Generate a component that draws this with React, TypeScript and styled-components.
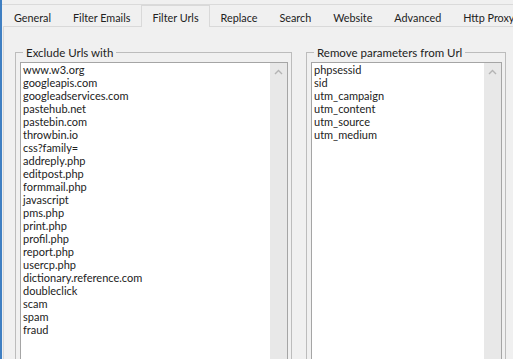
import styled, { createGlobalStyle } from "styled-components";

const GlobalStyle = createGlobalStyle`
  html, body {
    margin: 0;
    padding: 0;
    background: #f0f0f0;
  }
  body {
    font-family: Lato, "Open Sans", sans-serif;
    font-size: 11px;
    color: #222;
  }
`;

const tabs = [
  "General",
  "Filter Emails",
  "Filter Urls",
  "Replace",
  "Search",
  "Website",
  "Advanced",
  "Http Proxy",
];

const excludeUrls = [
  "www.w3.org",
  "googleapis.com",
  "googleadservices.com",
  "pastehub.net",
  "pastebin.com",
  "throwbin.io",
  "css?family=",
  "addreply.php",
  "editpost.php",
  "formmail.php",
  "javascript",
  "pms.php",
  "print.php",
  "profil.php",
  "report.php",
  "usercp.php",
  "dictionary.reference.com",
  "doubleclick",
  "scam",
  "spam",
  "fraud",
];

const removeParams = [
  "phpsessid",
  "sid",
  "utm_campaign",
  "utm_content",
  "utm_source",
  "utm_medium",
];

const Window = styled.div`
  width: 511px;
  height: 359px;
  overflow: hidden;
  border-left: 2px solid #3f7fc2;
  display: flex;
  flex-direction: column;
`;

const TabStrip = styled.div`
  margin-top: 4px;
  border-top: 1px solid #dadada;
  height: 23px;
  padding-left: 1px;
  display: flex;
  align-items: flex-end;
  white-space: nowrap;
`;

const Tab = styled.div<{ $active?: boolean }>`
  flex: none;
  line-height: 19px;
  font-size: 10.8px;
  padding: 2px 10px 0;
  box-sizing: border-box;
  border: 1px solid ${(p) => (p.$active ? "#d9d9d9" : "transparent")};
  border-bottom: none;
  margin-bottom: ${(p) => (p.$active ? "-1px" : "0")};
  height: ${(p) => (p.$active ? "22px" : "21px")};
  background: #f0f0f0;
  position: relative;
  z-index: ${(p) => (p.$active ? 1 : 0)};
`;

const Page = styled.div`
  flex: 1;
  margin-left: 1px;
  border-top: 1px solid #d9d9d9;
  border-left: 1px solid #d9d9d9;
  padding: 18px 0 0 11px;
  display: flex;
  gap: 14px;
  align-items: flex-start;
`;

const Group = styled.fieldset<{ $width: number }>`
  margin: 0;
  width: ${(p) => p.$width}px;
  box-sizing: border-box;
  border: 1px solid #bcbcbc;
  padding: 2px 3px 0 4px;
  min-width: 0;
`;

const Legend = styled.legend`
  margin-left: 3px;
  padding: 0 3px;
  line-height: 15px;
  font-size: 11.5px;
  color: #222;
`;

const ListBox = styled.div`
  height: 320px;
  border: 1px solid #a5a5a5;
  background: #fff;
  display: flex;
`;

const Items = styled.div`
  flex: 1;
  padding-left: 2px;
  min-width: 0;
`;

const Item = styled.div`
  height: 13px;
  line-height: 13px;
  white-space: nowrap;
`;

const ScrollBar = styled.div`
  flex: none;
  width: 17px;
  background: #e8e8e8;
  display: flex;
  justify-content: center;
  padding-top: 6px;
  box-sizing: border-box;
`;

function UpArrow() {
  return (
    <svg width="9" height="6" viewBox="0 0 9 6">
      <path d="M1 5 L4.5 1.5 L8 5" fill="none" stroke="#b4b4b4" strokeWidth="1.4" />
    </svg>
  );
}

function List({ items }: { items: string[] }) {
  return (
    <ListBox>
      <Items>
        {items.map((item) => (
          <Item key={item}>{item}</Item>
        ))}
      </Items>
      <ScrollBar>
        <UpArrow />
      </ScrollBar>
    </ListBox>
  );
}

export default function App() {
  return (
    <>
      <GlobalStyle />
      <Window>
        <TabStrip>
          {tabs.map((t) => (
            <Tab key={t} $active={t === "Filter Urls"}>
              {t}
            </Tab>
          ))}
        </TabStrip>
        <Page>
          <Group $width={277}>
            <Legend>Exclude Urls with</Legend>
            <List items={excludeUrls} />
          </Group>
          <Group $width={200}>
            <Legend>Remove parameters from Url</Legend>
            <List items={removeParams} />
          </Group>
        </Page>
      </Window>
    </>
  );
}
